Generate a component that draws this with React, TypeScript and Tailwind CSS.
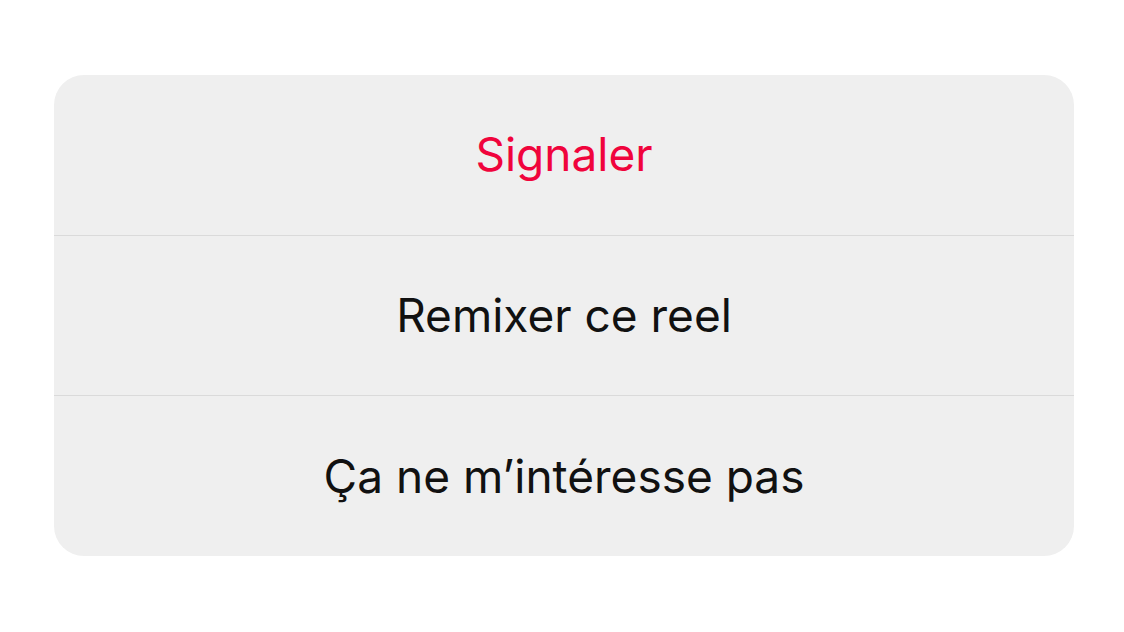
import React from 'react';

const OPTIONS: { label: string; danger?: boolean }[] = [
  { label: 'Signaler', danger: true },
  { label: 'Remixer ce reel' },
  { label: 'Ça ne m’intéresse pas' },
];

export default function App() {
  return (
    <div className="w-[1124px] h-[632px] bg-white flex pl-[54px] pt-[75px]" style={{ fontFamily: 'Inter, "Noto Sans", sans-serif' }}>
      <div className="w-[1020px] h-[481px] bg-[#efefef] rounded-[30px] overflow-hidden flex flex-col">
        {OPTIONS.map((option, i) => (
          <button
            key={option.label}
            type="button"
            className={`flex-1 flex items-center justify-center text-[46px] ${
              i > 0 ? 'border-t border-[#dadada]' : ''
            } ${option.danger ? 'text-[#f0043c]' : 'text-[#111111]'}`}
          >
            {option.label}
          </button>
        ))}
      </div>
    </div>
  );
}
